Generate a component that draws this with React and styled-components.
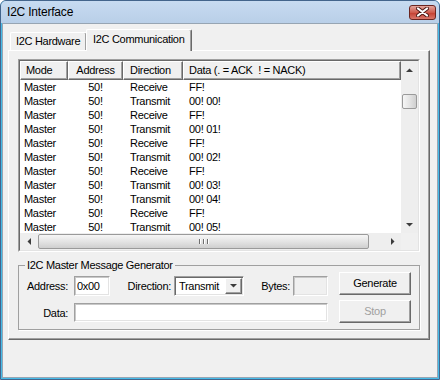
import styled, { createGlobalStyle } from "styled-components";

const GlobalStyle = createGlobalStyle`
  html, body {
    margin: 0;
    padding: 0;
    background: #ffffff;
  }
  body {
    font-family: "Liberation Sans", Arial, sans-serif;
    font-size: 11px;
    color: #000;
    letter-spacing: -0.3px;
  }
  * {
    box-sizing: border-box;
  }
`;

const Window = styled.div`
  width: 440px;
  height: 380px;
  display: flex;
  flex-direction: column;
  background: #45bbe8;
  border: 1px solid #43658c;
  border-radius: 6px 6px 0 0;
  overflow: hidden;
`;

const TitleBar = styled.div`
  height: 22px;
  flex: none;
  display: flex;
  align-items: center;
  justify-content: space-between;
  padding: 0 4px 0 6px;
  margin: 0 -1px;
  background: linear-gradient(#c7dbf1, #b9cfe8);
`;

const Title = styled.span`
  font-size: 12px;
  letter-spacing: -0.2px;
  padding-left: 1px;
`;

const CloseButton = styled.div`
  width: 27px;
  height: 15px;
  border: 1px solid #6b2520;
  border-radius: 3px;
  background: linear-gradient(#e3a59c, #cf5b4d 50%, #c33d2f 51%, #d9766a);
  display: flex;
  align-items: center;
  justify-content: center;
`;

const Client = styled.div`
  flex: 1;
  margin: 0 1px 1px 1px;
  border: 1px solid #97a5b3;
  background: #f0f0f0;
  padding: 5px 7px 0 5px;
  display: flex;
  flex-direction: column;
`;

const TabStrip = styled.div`
  height: 21px;
  display: flex;
  align-items: flex-end;
  padding-left: 2px;
  position: relative;
  z-index: 1;
`;

const Tab = styled.div`
  width: ${(p) => p.$w}px;
  height: ${(p) => (p.$active ? 22 : 18)}px;
  margin-bottom: ${(p) => (p.$active ? -1 : 0)}px;
  margin-left: ${(p) => (p.$active ? -1 : 0)}px;
  padding-left: ${(p) => (p.$active ? 6 : 5)}px;
  padding-top: ${(p) => (p.$active ? 3 : 2)}px;
  background: #f0f0f0;
  border-top: 1px solid #fff;
  border-left: 1px solid #fff;
  border-right: 1px solid #696969;
  box-shadow: inset -1px 0 0 #a0a0a0;
  border-radius: 2px 2px 0 0;
  white-space: nowrap;
`;

const Panel = styled.div`
  height: 290px;
  width: 422px;
  border: 1px solid;
  border-color: #fff #696969 #696969 #fff;
  box-shadow: inset -1px -1px 0 #a0a0a0;
  padding: 8px 0 0 9px;
  display: flex;
  flex-direction: column;
`;

const ListOuter = styled.div`
  width: 402px;
  height: 193px;
  border: 1px solid;
  border-color: #a0a0a0 #fff #fff #a0a0a0;
`;

const ListInner = styled.div`
  height: 100%;
  border: 1px solid;
  border-color: #696969 #e3e3e3 #e3e3e3 #696969;
  display: grid;
  grid-template-columns: 1fr 17px;
  grid-template-rows: 1fr 17px;
  background: #fff;
`;

const ListMain = styled.div`
  display: flex;
  flex-direction: column;
  overflow: hidden;
`;

const HeaderRow = styled.div`
  display: flex;
  height: 19px;
  flex: none;
`;

const HeaderCell = styled.div`
  width: ${(p) => (p.$w ? `${p.$w}px` : "auto")};
  flex: ${(p) => (p.$w ? "none" : 1)};
  background: #f0f0f0;
  border: 1px solid;
  border-color: #fff #696969 #696969 #fff;
  box-shadow: inset -1px -1px 0 #a0a0a0;
  padding-left: ${(p) => p.$pad}px;
  text-align: ${(p) => p.$align};
  line-height: 16px;
  white-space: pre;
  overflow: hidden;
`;

const Rows = styled.div`
  flex: 1;
  overflow: hidden;
`;

const Row = styled.div`
  display: flex;
  height: 14px;
  line-height: 14px;
`;

const Cell = styled.div`
  width: ${(p) => p.$w}px;
  flex: none;
  padding-left: ${(p) => p.$pad}px;
  text-align: ${(p) => p.$align};
  white-space: nowrap;
`;

const VScroll = styled.div`
  background: #eeeeee;
  display: flex;
  flex-direction: column;
  align-items: center;
`;

const HScroll = styled.div`
  background: #eeeeee;
  display: flex;
  align-items: center;
`;

const Corner = styled.div`
  background: #f0f0f0;
`;

const ArrowBox = styled.div`
  width: 17px;
  height: 17px;
  flex: none;
  display: flex;
  align-items: center;
  justify-content: center;
`;

const Track = styled.div`
  flex: 1;
  display: flex;
  flex-direction: ${(p) => (p.$vertical ? "column" : "row")};
  align-items: center;
`;

const Thumb = styled.div`
  border: 1px solid #9a9a9a;
  border-radius: 2px;
  display: flex;
  align-items: center;
  justify-content: center;
  gap: 1px;
  ${(p) =>
    p.$vertical
      ? `width: 15px; height: 15px; margin-top: 16px;
         background: linear-gradient(90deg, #f6f6f6, #e2e2e2 55%, #cfcfcf);`
      : `height: 15px; width: 331px; margin-left: 1px;
         background: linear-gradient(#f6f6f6, #e2e2e2 55%, #cfcfcf);`}
`;

const Grip = styled.span`
  width: 1px;
  height: 5px;
  background: #6f6f6f;
  box-shadow: 1px 0 0 #fff;
  margin: 0 1px;
`;

const Group = styled.fieldset`
  width: 402px;
  margin: 7px 0 0 0;
  padding: 0 8px 6px 0;
  border: 1px solid #a0a0a0;
  box-shadow: 1px 1px 0 #fff;
`;

const Legend = styled.legend`
  margin-left: 6px;
  padding: 0 2px;
  line-height: 13px;
`;

const GroupBody = styled.div`
  display: flex;
`;

const Fields = styled.div`
  display: flex;
  flex-direction: column;
  gap: 7px;
  padding-top: 4px;
`;

const FieldRow = styled.div`
  display: flex;
  align-items: center;
`;

const FieldLabel = styled.span`
  width: ${(p) => p.$w}px;
  margin-left: ${(p) => p.$ml || 0}px;
  margin-right: ${(p) => p.$mr}px;
  text-align: right;
  white-space: nowrap;
`;

const TextBox = styled.input`
  width: ${(p) => p.$w}px;
  height: ${(p) => p.$h}px;
  padding: 0 2px;
  font: inherit;
  letter-spacing: inherit;
  color: #000;
  background: ${(p) => (p.disabled ? "#f0f0f0" : "#fff")};
  border: 1px solid;
  border-color: #a0a0a0 #fff #fff #a0a0a0;
  box-shadow: inset 1px 1px 0 #c8c8c8, inset -1px -1px 0 #e3e3e3;
  outline: none;
`;

const Select = styled.div`
  width: 70px;
  height: 20px;
  display: flex;
  align-items: stretch;
  background: #fff;
  border: 1px solid;
  border-color: #a0a0a0 #fff #fff #a0a0a0;
  box-shadow: inset 1px 1px 0 #696969, inset -1px -1px 0 #e3e3e3;
  padding: 1px;
`;

const SelectText = styled.span`
  flex: 1;
  padding-left: 3px;
  line-height: 16px;
`;

const DropButton = styled.div`
  width: 17px;
  background: #f0f0f0;
  border: 1px solid;
  border-color: #fff #696969 #696969 #fff;
  box-shadow: inset -1px -1px 0 #a0a0a0;
  display: flex;
  align-items: center;
  justify-content: center;
`;

const Buttons = styled.div`
  display: flex;
  flex-direction: column;
  gap: 5px;
  margin-left: 11px;
`;

const PushButton = styled.button`
  width: 72px;
  height: 23px;
  font: inherit;
  letter-spacing: inherit;
  color: ${(p) => (p.disabled ? "#a0a0a0" : "#000")};
  background: #f0f0f0;
  border: 1px solid;
  border-color: #fff #696969 #696969 #fff;
  box-shadow: inset -1px -1px 0 #a0a0a0;
  padding: 0;
  padding-bottom: 1px;
`;

const columns = [
  { key: "mode", label: "Mode", w: 48, hpad: 5, align: "left" },
  { key: "addr", label: "Address", w: 55, hpad: 0, align: "center" },
  { key: "dir", label: "Direction", w: 60, hpad: 6, align: "left" },
  { key: "data", label: "Data (. = ACK  ! = NACK)", w: 218, hpad: 5, align: "left" },
];

const rows = [
  ["Receive", "FF!"],
  ["Transmit", "00! 00!"],
  ["Receive", "FF!"],
  ["Transmit", "00! 01!"],
  ["Receive", "FF!"],
  ["Transmit", "00! 02!"],
  ["Receive", "FF!"],
  ["Transmit", "00! 03!"],
  ["Transmit", "00! 04!"],
  ["Receive", "FF!"],
  ["Transmit", "00! 05!"],
];

function Arrow({ dir }) {
  const pts = {
    up: "0,4 3.5,0.5 7,4",
    down: "0,0 3.5,3.5 7,0",
    left: "4,0 0.5,3.5 4,7",
    right: "0,0 3.5,3.5 0,7",
  }[dir];
  const vert = dir === "up" || dir === "down";
  return (
    <svg width={vert ? 7 : 4} height={vert ? 4 : 7}>
      <polygon points={pts} fill="#3c3c3c" />
    </svg>
  );
}

export default function App() {
  return (
    <>
      <GlobalStyle />
      <Window>
        <TitleBar>
          <Title>I2C Interface</Title>
          <CloseButton>
            <svg width="13" height="10" viewBox="0 0 13 10">
              <path d="M2 1.5 L11 8.5 M11 1.5 L2 8.5" stroke="#4d1a16" strokeWidth="4" strokeLinecap="round" />
              <path d="M2 1.5 L11 8.5 M11 1.5 L2 8.5" stroke="#fff" strokeWidth="2.2" strokeLinecap="round" />
            </svg>
          </CloseButton>
        </TitleBar>
        <Client>
          <TabStrip>
            <Tab $w={77}>I2C Hardware</Tab>
            <Tab $w={106} $active>I2C Communication</Tab>
          </TabStrip>
          <Panel>
            <ListOuter>
              <ListInner>
                <ListMain>
                  <HeaderRow>
                    {columns.map((c) => (
                      <HeaderCell key={c.key} $w={c.w} $pad={c.hpad} $align={c.align}>
                        {c.label}
                      </HeaderCell>
                    ))}
                  </HeaderRow>
                  <Rows>
                    {rows.map(([dir, data], i) => (
                      <Row key={i}>
                        <Cell $w={48} $pad={4} $align="left">Master</Cell>
                        <Cell $w={55} $pad={0} $align="center">50!</Cell>
                        <Cell $w={60} $pad={7} $align="left">{dir}</Cell>
                        <Cell $w={218} $pad={6} $align="left">{data}</Cell>
                      </Row>
                    ))}
                  </Rows>
                </ListMain>
                <VScroll>
                  <ArrowBox><Arrow dir="up" /></ArrowBox>
                  <Track $vertical>
                    <Thumb $vertical />
                  </Track>
                  <ArrowBox><Arrow dir="down" /></ArrowBox>
                </VScroll>
                <HScroll>
                  <ArrowBox><Arrow dir="left" /></ArrowBox>
                  <Track>
                    <Thumb>
                      <Grip />
                      <Grip />
                      <Grip />
                    </Thumb>
                  </Track>
                  <ArrowBox><Arrow dir="right" /></ArrowBox>
                </HScroll>
                <Corner />
              </ListInner>
            </ListOuter>

            <Group>
              <Legend>I2C Master Message Generator</Legend>
              <GroupBody>
                <Fields>
                  <FieldRow>
                    <FieldLabel $w={49} $mr={6}>Address:</FieldLabel>
                    <TextBox $w={36} $h={20} defaultValue="0x00" readOnly />
                    <FieldLabel $w={46} $ml={15} $mr={3}>Direction:</FieldLabel>
                    <Select>
                      <SelectText>Transmit</SelectText>
                      <DropButton>
                        <Arrow dir="down" />
                      </DropButton>
                    </Select>
                    <FieldLabel $w={31} $ml={15} $mr={3}>Bytes:</FieldLabel>
                    <TextBox $w={35} $h={20} disabled />
                  </FieldRow>
                  <FieldRow>
                    <FieldLabel $w={49} $mr={6}>Data:</FieldLabel>
                    <TextBox $w={254} $h={19} readOnly />
                  </FieldRow>
                </Fields>
                <Buttons>
                  <PushButton>Generate</PushButton>
                  <PushButton disabled>Stop</PushButton>
                </Buttons>
              </GroupBody>
            </Group>
          </Panel>
        </Client>
      </Window>
    </>
  );
}
